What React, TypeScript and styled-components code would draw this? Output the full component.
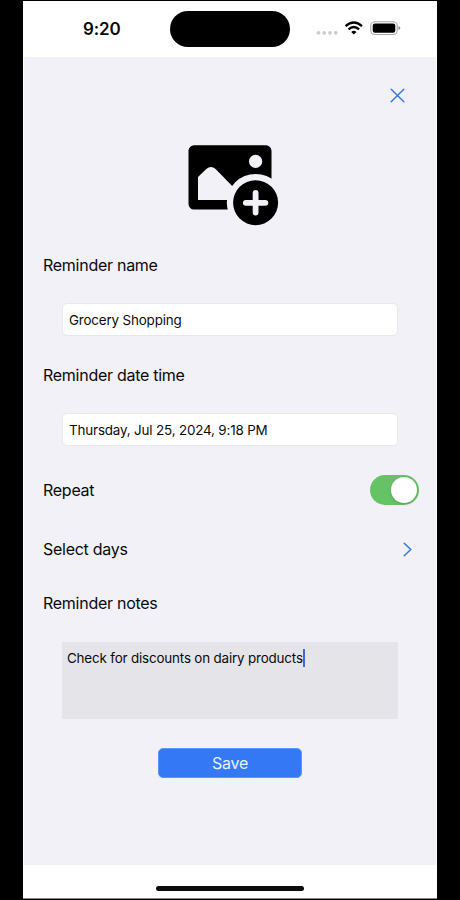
import React, { useState } from "react";
import styled, { createGlobalStyle } from "styled-components";

const GlobalStyle = createGlobalStyle`
  * { box-sizing: border-box; }
  body { margin: 0; background: #000; }
  button, input, textarea { font: inherit; color: inherit; }
`;

const Stage = styled.div`
  width: 460px;
  height: 900px;
  padding: 1px 23px;
  background: #000;
  font-family: Inter, "Liberation Sans", sans-serif;
  color: #0a0a0c;
  overflow: hidden;
`;

const Phone = styled.main`
  display: flex;
  flex-direction: column;
  width: 414px;
  height: 898px;
  padding: 0 1px;
  background: #fff;
  border: solid #858585;
  border-width: 0 0 1px;
`;

const StatusBar = styled.header`
  display: grid;
  grid-template-columns: 145.5px 120.5px 1fr;
  height: 56px;
  padding-top: 10px;
`;

const Clock = styled.div`
  padding: 7.5px 0 0 59px;
  font-size: 17px;
  line-height: 21px;
  font-weight: 600;
  letter-spacing: -0.1px;
`;

const Island = styled.div`
  height: 35.5px;
  border-radius: 18px;
  background: #000;
`;

const StatusIcons = styled.div`
  display: flex;
  height: 14px;
  margin: 10px 0 0 26px;
`;

const Sheet = styled.section`
  display: flex;
  flex-direction: column;
  height: 808px;
  background: #f2f1f7;
`;

const IconButton = styled.button`
  display: flex;
  padding: 0;
  border: 0;
  background: none;
`;

const CloseRow = styled.div`
  display: flex;
  justify-content: flex-end;
  height: 88px;
  padding: 31px 31px 0 0;
`;

const PhotoButton = styled(IconButton)`
  width: 91px;
  height: 81px;
  margin-left: 164px;
`;

const Label = styled.label<{ $top: number }>`
  display: block;
  height: 22px;
  margin: ${(p) => p.$top}px 0 0 19px;
  font-size: 16px;
  line-height: 22px;
  letter-spacing: -0.27px;
`;

const Field = styled.input`
  width: 336px;
  height: 33px;
  margin: 27px 0 0 38px;
  padding: 0 6px;
  border: 1px solid #e9e8ed;
  border-radius: 5px;
  background: #fff;
  font-size: 13.4px;
  letter-spacing: -0.16px;
  outline: none;
`;

const Row = styled.div<{ $top: number; $right: number; $height: number }>`
  display: flex;
  align-items: center;
  justify-content: space-between;
  height: ${(p) => p.$height}px;
  margin-top: ${(p) => p.$top}px;
  padding-right: ${(p) => p.$right}px;
`;

const Switch = styled.button<{ $on: boolean }>`
  display: flex;
  justify-content: ${(p) => (p.$on ? "flex-end" : "flex-start")};
  width: 49px;
  height: 30px;
  padding: 2px;
  border: 0;
  border-radius: 15px;
  background: ${(p) => (p.$on ? "#65c366" : "#d8d8dc")};
`;

const Knob = styled.span`
  width: 26px;
  height: 26px;
  border-radius: 50%;
  background: #fff;
  box-shadow: 0 1px 3px rgba(0, 0, 0, 0.18);
`;

const Notes = styled.div`
  display: flex;
  align-items: flex-start;
  width: 336px;
  height: 77px;
  margin: 28px 0 0 38px;
  padding: 6.5px 5px;
  background: #e5e4e9;
  font-size: 13.4px;
  line-height: 18px;
  letter-spacing: -0.17px;
  white-space: nowrap;
`;

const Caret = styled.span`
  width: 2px;
  height: 18px;
  background: #3f67d8;
`;

const SaveButton = styled.button`
  width: 144px;
  height: 30px;
  margin: 29px 0 0 134px;
  padding: 1px 0 0;
  border: 1px solid #5b97f6;
  border-radius: 5px;
  background: #3478f6;
  color: #e8f4ff;
  font-size: 16px;
  line-height: 27px;
  letter-spacing: -0.2px;
`;

const HomeIndicator = styled.div`
  width: 148px;
  height: 5px;
  margin: 20.5px 0 0 132px;
  border-radius: 3px;
  background: #0c0c0c;
`;

const SystemIcons = () => (
  <svg width="86" height="14" viewBox="0 0 86 14" aria-hidden="true">
    <g fill="#cbcbcb">
      <circle cx="2.5" cy="11.8" r="1.9" />
      <circle cx="8.2" cy="11.8" r="1.9" />
      <circle cx="14" cy="11.8" r="1.9" />
      <circle cx="19.7" cy="11.8" r="1.9" />
    </g>
    <g fill="none" stroke="#000" strokeWidth="2.3">
      <path d="M29.6 5.2Q37.8-2.2 46 5.2" />
      <path d="M32.5 8.3Q37.8 3.6 43.1 8.3" />
    </g>
    <path d="M35.2 10.9Q37.8 8.8 40.4 10.9L37.8 13.6Z" />
    <rect x="54.8" y="0.7" width="26.4" height="12.8" rx="4" fill="none" stroke="#a5a5a5" strokeWidth="1.1" />
    <rect x="56.7" y="2.5" width="22.6" height="9.2" rx="2.3" />
    <path d="M82.5 4.9Q84.4 5.6 84.4 7T82.5 9.1Z" fill="#8d8d8d" />
  </svg>
);

const CloseIcon = () => (
  <svg width="15" height="15" viewBox="0 0 15 15" fill="none" stroke="#3478e0" strokeWidth="1.45" strokeLinecap="round">
    <path d="M1.2 1.2L13.8 13.8M13.8 1.2L1.2 13.8" />
  </svg>
);

const ChevronIcon = () => (
  <svg width="9" height="15" viewBox="0 0 9 15" fill="none" stroke="#3478e0" strokeWidth="1.5" strokeLinecap="round" strokeLinejoin="round">
    <path d="M1.2 1.2L7.8 7.5L1.2 13.8" />
  </svg>
);

const AddPhotoIcon = () => (
  <svg width="91" height="81" viewBox="0 0 91 81" aria-hidden="true">
    <rect x="0.5" y="0.3" width="83" height="64.2" rx="5.5" />
    <g fill="#f2f1f7">
      <path d="M10 55V32L18.3 23.9Q23 20.2 27.6 24L44.2 41L50 47V55Z" />
      <circle cx="67.6" cy="16.4" r="6.6" />
      <circle cx="67.6" cy="57.7" r="28.8" />
    </g>
    <circle cx="67.6" cy="57.7" r="22.5" />
    <path d="M67.6 48V67.6M57.8 57.8H77.4" stroke="#f2f1f7" strokeWidth="5.8" strokeLinecap="round" />
  </svg>
);

export default function App() {
  const [name, setName] = useState("Grocery Shopping");
  const [date, setDate] = useState("Thursday, Jul 25, 2024, 9:18 PM");
  const [repeat, setRepeat] = useState(true);

  return (
    <>
      <GlobalStyle />
      <Stage>
        <Phone>
          <StatusBar>
            <Clock>9:20</Clock>
            <Island />
            <StatusIcons><SystemIcons /></StatusIcons>
          </StatusBar>
          <Sheet>
            <CloseRow>
              <IconButton aria-label="Close"><CloseIcon /></IconButton>
            </CloseRow>
            <PhotoButton aria-label="Add photo"><AddPhotoIcon /></PhotoButton>
            <Label $top={28} htmlFor="name">Reminder name</Label>
            <Field id="name" value={name} onChange={(e) => setName(e.target.value)} />
            <Label $top={28} htmlFor="date">Reminder date time</Label>
            <Field id="date" value={date} onChange={(e) => setDate(e.target.value)} />
            <Row $top={29} $right={17} $height={30}>
              <Label $top={0}>Repeat</Label>
              <Switch $on={repeat} role="switch" aria-checked={repeat} aria-label="Repeat" onClick={() => setRepeat(!repeat)}>
                <Knob />
              </Switch>
            </Row>
            <Row $top={33} $right={24} $height={22}>
              <Label $top={0}>Select days</Label>
              <IconButton aria-label="Select days"><ChevronIcon /></IconButton>
            </Row>
            <Label $top={32}>Reminder notes</Label>
            <Notes>
              <span>Check for discounts on dairy products</span>
              <Caret />
            </Notes>
            <SaveButton>Save</SaveButton>
          </Sheet>
          <HomeIndicator />
        </Phone>
      </Stage>
    </>
  );
}
